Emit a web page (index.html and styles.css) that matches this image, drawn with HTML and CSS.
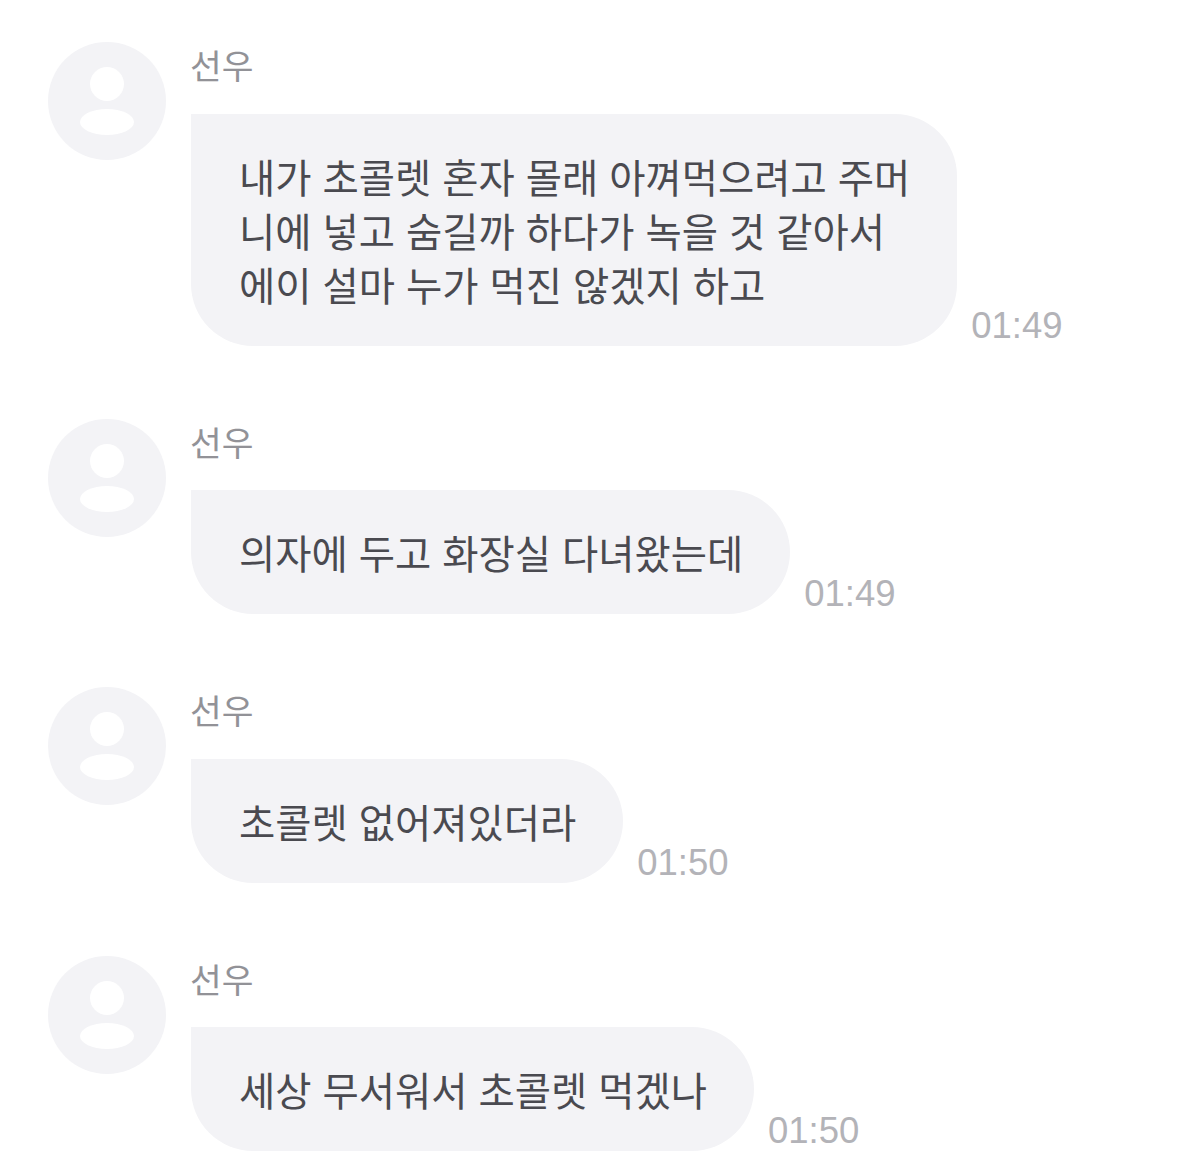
FILE: index.html
```html
<!DOCTYPE html>
<html lang="ko">
<head>
<meta charset="utf-8">
<title>선우</title>
<link rel="stylesheet" href="styles.css">
</head>
<body>
<main class="chat">
  <article class="msg">
    <svg class="avatar" viewBox="0 0 118 118"><circle cx="59" cy="59" r="59" fill="#f3f3f6"/><circle cx="59" cy="42" r="17" fill="#fff"/><ellipse cx="59" cy="80" rx="27" ry="13" fill="#fff"/></svg>
    <div class="body">
      <div class="name">선우</div>
      <div class="line">
        <div class="bubble">내가 초콜렛 혼자 몰래 아껴먹으려고 주머<br>니에 넣고 숨길까 하다가 녹을 것 같아서<br>에이 설마 누가 먹진 않겠지 하고</div>
        <time class="time">01:49</time>
      </div>
    </div>
  </article>
  <article class="msg">
    <svg class="avatar" viewBox="0 0 118 118"><circle cx="59" cy="59" r="59" fill="#f3f3f6"/><circle cx="59" cy="42" r="17" fill="#fff"/><ellipse cx="59" cy="80" rx="27" ry="13" fill="#fff"/></svg>
    <div class="body">
      <div class="name">선우</div>
      <div class="line">
        <div class="bubble">의자에 두고 화장실 다녀왔는데</div>
        <time class="time">01:49</time>
      </div>
    </div>
  </article>
  <article class="msg">
    <svg class="avatar" viewBox="0 0 118 118"><circle cx="59" cy="59" r="59" fill="#f3f3f6"/><circle cx="59" cy="42" r="17" fill="#fff"/><ellipse cx="59" cy="80" rx="27" ry="13" fill="#fff"/></svg>
    <div class="body">
      <div class="name">선우</div>
      <div class="line">
        <div class="bubble">초콜렛 없어져있더라</div>
        <time class="time">01:50</time>
      </div>
    </div>
  </article>
  <article class="msg">
    <svg class="avatar" viewBox="0 0 118 118"><circle cx="59" cy="59" r="59" fill="#f3f3f6"/><circle cx="59" cy="42" r="17" fill="#fff"/><ellipse cx="59" cy="80" rx="27" ry="13" fill="#fff"/></svg>
    <div class="body">
      <div class="name">선우</div>
      <div class="line">
        <div class="bubble">세상 무서워서 초콜렛 먹겠나</div>
        <time class="time">01:50</time>
      </div>
    </div>
  </article>
</main>
</body>
</html>
```
FILE: styles.css
```css
html, body { margin: 0; padding: 0; background: #fff; }
body { height: 1172px; overflow: hidden; font-family: "Noto Sans CJK KR", "Noto Sans", sans-serif; }
.chat { display: flex; flex-direction: column; gap: 73px; padding: 42px 0 0 48px; }
.msg { display: flex; gap: 25px; align-items: flex-start; }
.avatar { width: 118px; height: 118px; flex: none; }
.body { display: flex; flex-direction: column; }
.name { height: 71.5px; font-size: 34.5px; line-height: 45px; color: #929297; margin-left: -1px; }
.line { display: flex; align-items: flex-end; gap: 14px; }
.bubble { background: #f3f3f6; color: #4a4a50; font-size: 39.4px; line-height: 54px; padding: 35px 47px 35px 48px; border-radius: 0 62px 62px 62px; white-space: nowrap; }
.time { font-family: "Liberation Sans", Arial, sans-serif; font-size: 36.5px; line-height: 42px; color: #b3b3b8; margin-bottom: -1px; }
```
